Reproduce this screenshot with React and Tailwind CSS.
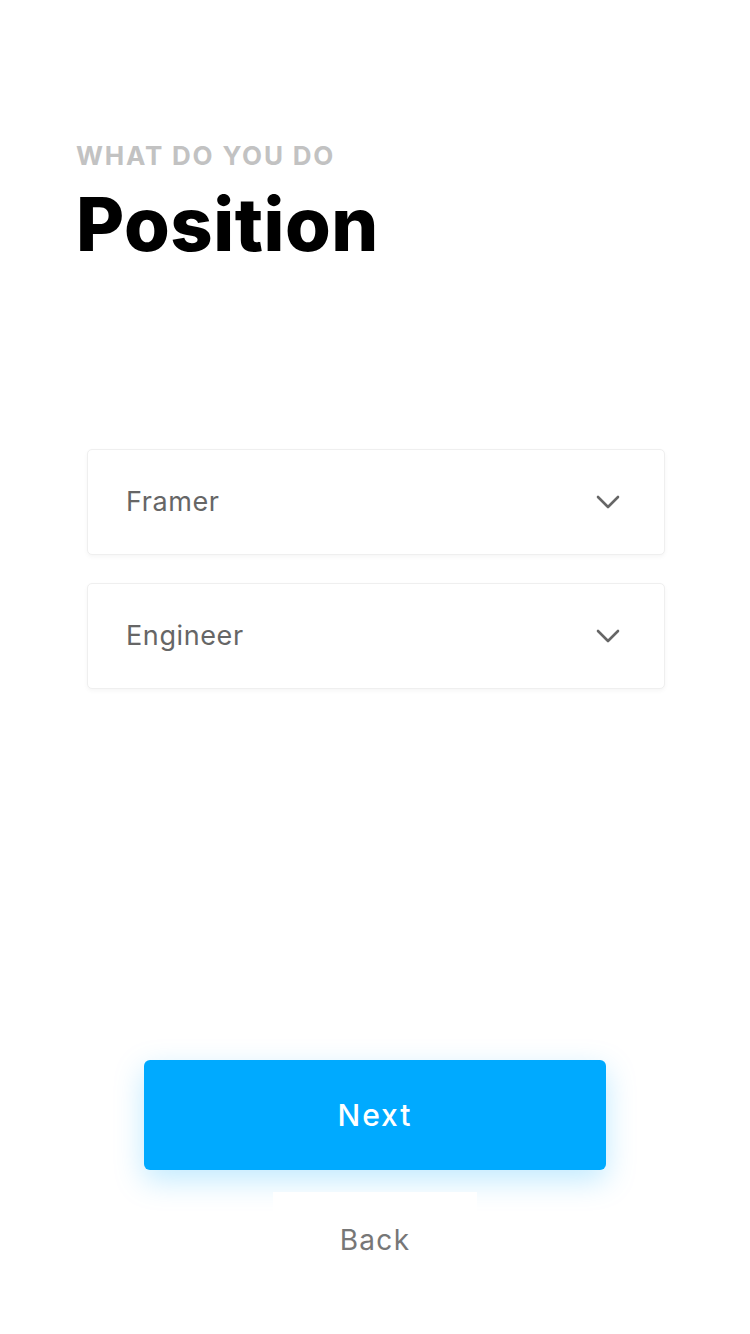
import React from 'react';

const Chevron = () => (
    <svg width="24" height="14" viewBox="0 0 24 14" fill="none">
        <path d="M2 2l10 10L22 2" stroke="#666666" strokeWidth="2.6" strokeLinecap="round" strokeLinejoin="round" />
    </svg>
);

const SelectBox = ({ value }) => (
    <div className="h-[106px] bg-white border border-[#efefef] rounded-[5px] shadow-[0_2px_4px_rgba(0,0,0,0.04)] flex items-center justify-between pl-[38px] pr-[44px]">
        <span className="text-[27px] text-[#666666] tracking-[0.6px]">{value}</span>
        <Chevron />
    </div>
);

const App = () => {
    return (
        <div className="w-[750px] h-[1334px] bg-white flex flex-col font-['Inter',sans-serif]">
            {/* Başlık */}
            <div className="pt-[139px] pl-[76px]">
                <div className="text-[26px] leading-[34px] font-bold text-[#c2c2c2] tracking-[1.8px]">WHAT DO YOU DO</div>
                <h1 className="text-[74px] leading-[86px] font-extrabold text-black tracking-[0.5px] mt-[8px]">Position</h1>
            </div>

            {/* Seçimler */}
            <div className="mt-[182px] ml-[87px] w-[578px] flex flex-col gap-[28px]">
                <SelectBox value="Framer" />
                <SelectBox value="Engineer" />
            </div>

            <div className="flex-1" />

            {/* Butonlar */}
            <div className="flex flex-col items-center pb-[46px]">
                <button className="w-[462px] h-[110px] bg-[#00aaff] rounded-[6px] shadow-[0_10px_30px_rgba(0,170,255,0.25)] text-white text-[30px] tracking-[2px] font-medium">
                    Next
                </button>
                <button className="relative mt-[22px] w-[204px] h-[96px] bg-white text-[#777777] text-[28px] tracking-[1.3px]">
                    Back
                </button>
            </div>
        </div>
    );
};

export default App;
